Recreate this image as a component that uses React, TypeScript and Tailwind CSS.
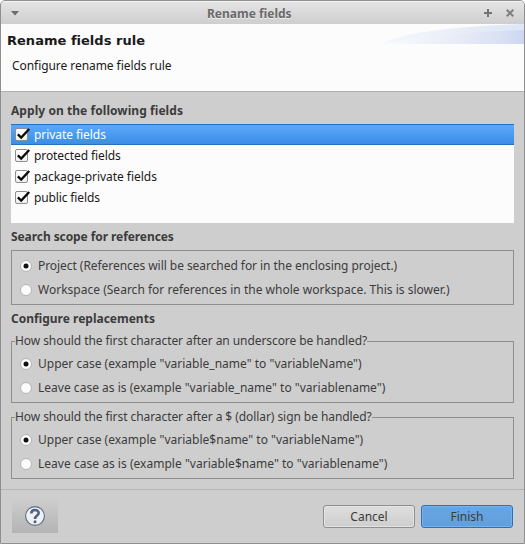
import React from "react";

const fields = [
  { label: "private fields", tracking: "tracking-[-0.06px]" },
  { label: "protected fields", tracking: "tracking-[-0.08px]" },
  { label: "package-private fields", tracking: "tracking-[-0.04px]" },
  { label: "public fields", tracking: "tracking-[-0.13px]" },
];

function Check() {
  return (
    <span className="relative ml-[4px] block h-[13px] w-[13px] rounded-[2px] border border-[#8e8e8e] bg-gradient-to-b from-white to-[#f0f0f0]">
      <svg className="absolute -left-px -top-px" width="16" height="13" viewBox="0 0 16 13">
        <path d="M2.8 6.4 L6.2 9.6 L14.2 1" fill="none" stroke="#0a0a0a" strokeWidth="2.3" />
      </svg>
    </span>
  );
}

function Radio({ on, label, tracking }: { on: boolean; label: string; tracking: string }) {
  return (
    <div className="flex h-6 items-center pl-[8px]">
      <svg width="12" height="12" viewBox="0 0 12 12" className="shrink-0">
        <circle cx="6" cy="6" r="5.5" fill="#fcfcfc" stroke="#b3b3b3" strokeWidth="1" />
        {on && <circle cx="6" cy="6" r="2.5" fill="#111" />}
      </svg>
      <span className={"ml-[6px] " + tracking}>{label}</span>
    </div>
  );
}

function Group({ legend, children }: { legend: string; children: React.ReactNode }) {
  return (
    <div className="mx-[10px]">
      <div className="flex h-[18px] items-stretch">
        <span className="mt-[9px] w-[4px] border-l border-t border-[#8f8f8f]" />
        <span className="leading-[17px] tracking-[-0.07px]">{legend}</span>
        <span className="mt-[9px] flex-1 border-r border-t border-[#8f8f8f]" />
      </div>
      <div className="h-[53px] border border-t-0 border-[#8f8f8f] pt-[2px]">{children}</div>
    </div>
  );
}

export default function App() {
  return (
    <div className="h-[544px] w-[525px] bg-white font-['Noto_Sans',sans-serif] text-[12px] leading-[16px] text-[#3c3c3c]">
      <div className="flex h-full flex-col overflow-hidden rounded-t-[5px] border border-[#8f8f8f] bg-[#cecece]">
        <div className="flex h-[23px] shrink-0 items-center border-t border-[#f4f4f4] bg-gradient-to-b from-[#e4e4e4] to-[#cecece] text-[#6a6a6a]">
          <div className="flex w-[206px] items-center pl-[10px]">
            <svg width="8" height="5" viewBox="0 0 8 5"><path d="M0 0h8L4 4.5z" fill="#6c6c6c" /></svg>
          </div>
          <span className="mt-[2px] font-bold [text-shadow:0_1px_0_#eee]">Rename fields</span>
          <div className="flex flex-1 items-center justify-end gap-[14px] pr-[10px]">
            <svg width="8" height="8" viewBox="0 0 8 8"><path d="M4 0v8M0 4h8" stroke="#747474" strokeWidth="2" /></svg>
            <svg width="8" height="8" viewBox="0 0 8 8"><path d="M.7.7l6.6 6.6M7.3.7L.7 7.3" stroke="#808080" strokeWidth="2" /></svg>
          </div>
        </div>

        <div className="flex h-[68px] shrink-0 border-b border-[#b0b0b0] bg-[#fcfcfc] text-[#1a1a1a]">
          <div className="flex-1 pl-[6px] pt-[9px]">
            <div className="font-['DejaVu_Sans',sans-serif] text-[13px] font-bold tracking-[0.02px]">Rename fields rule</div>
            <div className="mt-[9px] pl-[5px] tracking-[-0.06px]">Configure rename fields rule</div>
          </div>
          <svg width="141" height="20" viewBox="0 0 141 20">
            <defs>
              <linearGradient id="swoosh" x1="0" x2="1">
                <stop offset="0" stopColor="#fafbfd" />
                <stop offset=".55" stopColor="#e7ebf7" />
                <stop offset=".85" stopColor="#d8e0f4" />
                <stop offset="1" stopColor="#cdd6f2" />
              </linearGradient>
              <linearGradient id="swooshTop" x1="0" x2="1">
                <stop offset="0" stopColor="#f5f8fc" />
                <stop offset="1" stopColor="#dce6f5" />
              </linearGradient>
            </defs>
            <path d="M0 20C15 8 80 2 141 0V20z" fill="url(#swooshTop)" />
            <path d="M0 20C40 12 90 8 141 6V20z" fill="url(#swoosh)" />
          </svg>
        </div>

        <div className="mt-[11px] h-[16px] pl-[10px] font-bold tracking-[0.06px]">Apply on the following fields</div>
        <div className="mx-[10px] mt-[5px] h-[99px] shrink-0 bg-[#fcfcfc] text-[#1a1a1a]">
          {fields.map((f, i) => (
            <div
              key={f.label}
              className={
                i === 0
                  ? "flex h-[21px] items-center border-y border-[#2a70bd] bg-gradient-to-b from-[#5ca8fb] to-[#3b8de7] text-white"
                  : "flex h-[21px] items-center"
              }
            >
              <Check />
              <span className={"ml-[6px] " + f.tracking}>{f.label}</span>
            </div>
          ))}
        </div>

        <div className="mt-[6px] h-[16px] pl-[10px] font-bold tracking-[-0.08px]">Search scope for references</div>
        <div className="mx-[10px] mt-[5px] h-[55px] shrink-0 border border-[#8f8f8f] pt-[3px]">
          <Radio on label="Project (References will be searched for in the enclosing project.)" tracking="tracking-[-0.055px]" />
          <Radio on={false} label="Workspace (Search for references in the whole workspace. This is slower.)" tracking="tracking-[0.01px]" />
        </div>

        <div className="mb-[5px] mt-[6px] h-[16px] pl-[10px] font-bold">Configure replacements</div>
        <Group legend="How should the first character after an underscore be handled?">
          <Radio on label={'Upper case (example "variable_name" to "variableName")'} tracking="tracking-[0.01px]" />
          <Radio on={false} label={'Leave case as is (example "variable_name" to "variablename")'} tracking="tracking-[0.016px]" />
        </Group>
        <div className="h-[5px]" />
        <Group legend="How should the first character after a $ (dollar) sign be handled?">
          <Radio on label={'Upper case (example "variable$name" to "variableName")'} tracking="tracking-[0.01px]" />
          <Radio on={false} label={'Leave case as is (example "variable$name" to "variablename")'} tracking="tracking-[0.025px]" />
        </Group>

        <div className="mt-[10px] flex flex-1 items-start border-t border-[#b6b6b6] pl-[11px] pr-[11px]">
          <div className="mt-[8px] flex h-[35px] w-[46px] items-center justify-center bg-gradient-to-b from-[#cecece] to-[#b4b4b4]">
            <svg width="20" height="20" viewBox="0 0 20 20">
              <circle cx="10" cy="10" r="9.4" fill="#f0f1f3" stroke="#5a6b8c" strokeWidth="1.1" />
              <path d="M6.3 7.4C6.3 3 13.7 3 13.7 7C13.7 9.6 10 9.4 10 12.9" fill="none" stroke="#4d6088" strokeWidth="2.6" />
              <circle cx="10" cy="15.7" r="1.5" fill="#4d6088" />
            </svg>
          </div>
          <div className="ml-auto mt-[15px] flex gap-[6px]">
            <button className="h-[23px] w-[92px] rounded-[3px] border border-[#8f8f8f] bg-gradient-to-b from-[#dedede] to-[#cecece] shadow-[inset_0_0_0_1px_#e4e4e4]">Cancel</button>
            <button className="h-[23px] w-[92px] rounded-[3px] border border-[#2a70bd] bg-gradient-to-b from-[#68a5e4] to-[#619edc] shadow-[inset_0_0_0_1px_#77b0eb]">Finish</button>
          </div>
        </div>
      </div>
    </div>
  );
}
